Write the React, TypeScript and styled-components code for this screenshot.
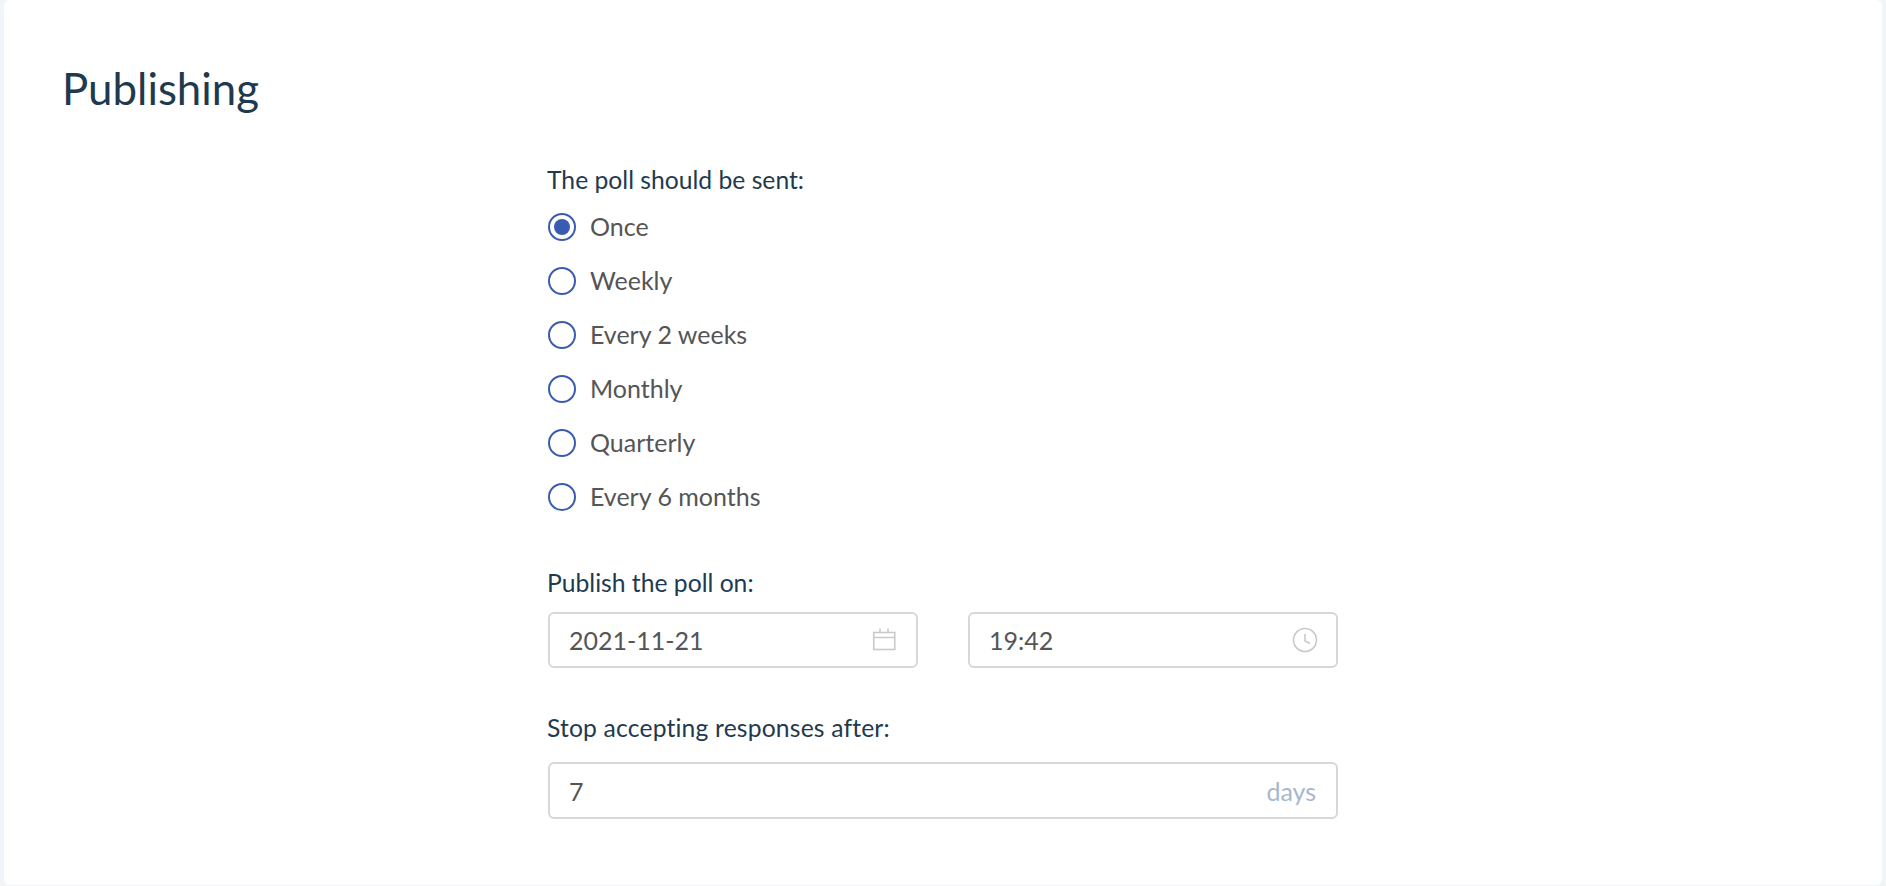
import styled, { createGlobalStyle } from "styled-components";

const GlobalStyle = createGlobalStyle`
  html, body {
    margin: 0;
    padding: 0;
    height: 100%;
    overflow: hidden;
    background-color: #f1f5f9;
  }
  body {
    font-family: "Lato", "Liberation Sans", sans-serif;
    font-variant-ligatures: none;
  }
`;

const Card = styled.main`
  margin: 0 4px;
  height: 885px;
  box-sizing: border-box;
  padding: 60px 58px 0;
  background-color: #ffffff;
  border-radius: 6px;
`;

const Title = styled.h1`
  margin: 0;
  font-size: 43.8px;
  line-height: 56px;
  font-weight: 400;
  color: #1f3a4f;
`;

const Form = styled.form`
  width: 790px;
  margin: 50px 0 0 486px;
  display: flex;
  flex-direction: column;
`;

const Label = styled.div<{ $spread?: boolean }>`
  margin-left: -1px;
  font-size: 24.7px;
  line-height: 28px;
  letter-spacing: ${(props) => (props.$spread ? "0.16px" : "0")};
  color: #1f3a4f;
`;

const RadioList = styled.div`
  display: flex;
  flex-direction: column;
  margin-top: 6px;
  margin-bottom: 45px;
`;

const RadioRow = styled.label`
  height: 54px;
  display: flex;
  align-items: center;
  gap: 14px;
  font-size: 25px;
  color: #555555;
`;

const RadioText = styled.span`
  padding-bottom: 2px;
`;

const RadioCircle = styled.span<{ $checked?: boolean }>`
  width: 28px;
  height: 28px;
  box-sizing: border-box;
  border: 2px solid #3a5cb0;
  border-radius: 50%;
  display: flex;
  align-items: center;
  justify-content: center;
  &::after {
    content: "";
    display: ${(props) => (props.$checked ? "block" : "none")};
    width: 16px;
    height: 16px;
    border-radius: 50%;
    background-color: #3a5cb0;
  }
`;

const FieldRow = styled.div`
  display: flex;
  gap: 50px;
  margin-top: 15px;
  margin-bottom: 46px;
`;

const Field = styled.div<{ $wide?: boolean }>`
  width: ${(props) => (props.$wide ? "790px" : "370px")};
  height: ${(props) => (props.$wide ? "57px" : "56px")};
  box-sizing: border-box;
  margin-top: ${(props) => (props.$wide ? "20px" : "0")};
  padding: 0 20px 0 19px;
  border: 2px solid #d5d8da;
  border-radius: 6px;
  display: flex;
  align-items: center;
  justify-content: space-between;
  font-size: 25px;
  color: #555555;
`;

const Unit = styled.span`
  color: #a5b8d0;
`;

const ClockSvg = styled.svg`
  margin-right: -2px;
`;

const CalendarIcon = () => (
  <svg width="24" height="24" viewBox="0 0 24 24" fill="none" stroke="#c8c9ca" strokeWidth="1.6">
    <rect x="1.75" y="4.5" width="21" height="17" />
    <path d="M1.75 9.5H22.75M8 .5V4.5M16 .5V4.5" />
  </svg>
);

const ClockIcon = () => (
  <ClockSvg width="26" height="26" viewBox="0 0 26 26" fill="none" stroke="#c8c9ca" strokeWidth="1.6">
    <circle cx="13" cy="13" r="11.5" />
    <path d="M13 7V14L18 16.5" />
  </ClockSvg>
);

const options = ["Once", "Weekly", "Every 2 weeks", "Monthly", "Quarterly", "Every 6 months"];

export default function App() {
  return (
    <>
      <GlobalStyle />
      <Card>
        <Title>Publishing</Title>
        <Form>
          <Label>The poll should be sent:</Label>
          <RadioList>
            {options.map((option, index) => (
              <RadioRow key={option}>
                <RadioCircle $checked={index === 0} />
                <RadioText>{option}</RadioText>
              </RadioRow>
            ))}
          </RadioList>
          <Label>Publish the poll on:</Label>
          <FieldRow>
            <Field>
              2021-11-21
              <CalendarIcon />
            </Field>
            <Field>
              19:42
              <ClockIcon />
            </Field>
          </FieldRow>
          <Label $spread>Stop accepting responses after:</Label>
          <Field $wide>
            7
            <Unit>days</Unit>
          </Field>
        </Form>
      </Card>
    </>
  );
}
